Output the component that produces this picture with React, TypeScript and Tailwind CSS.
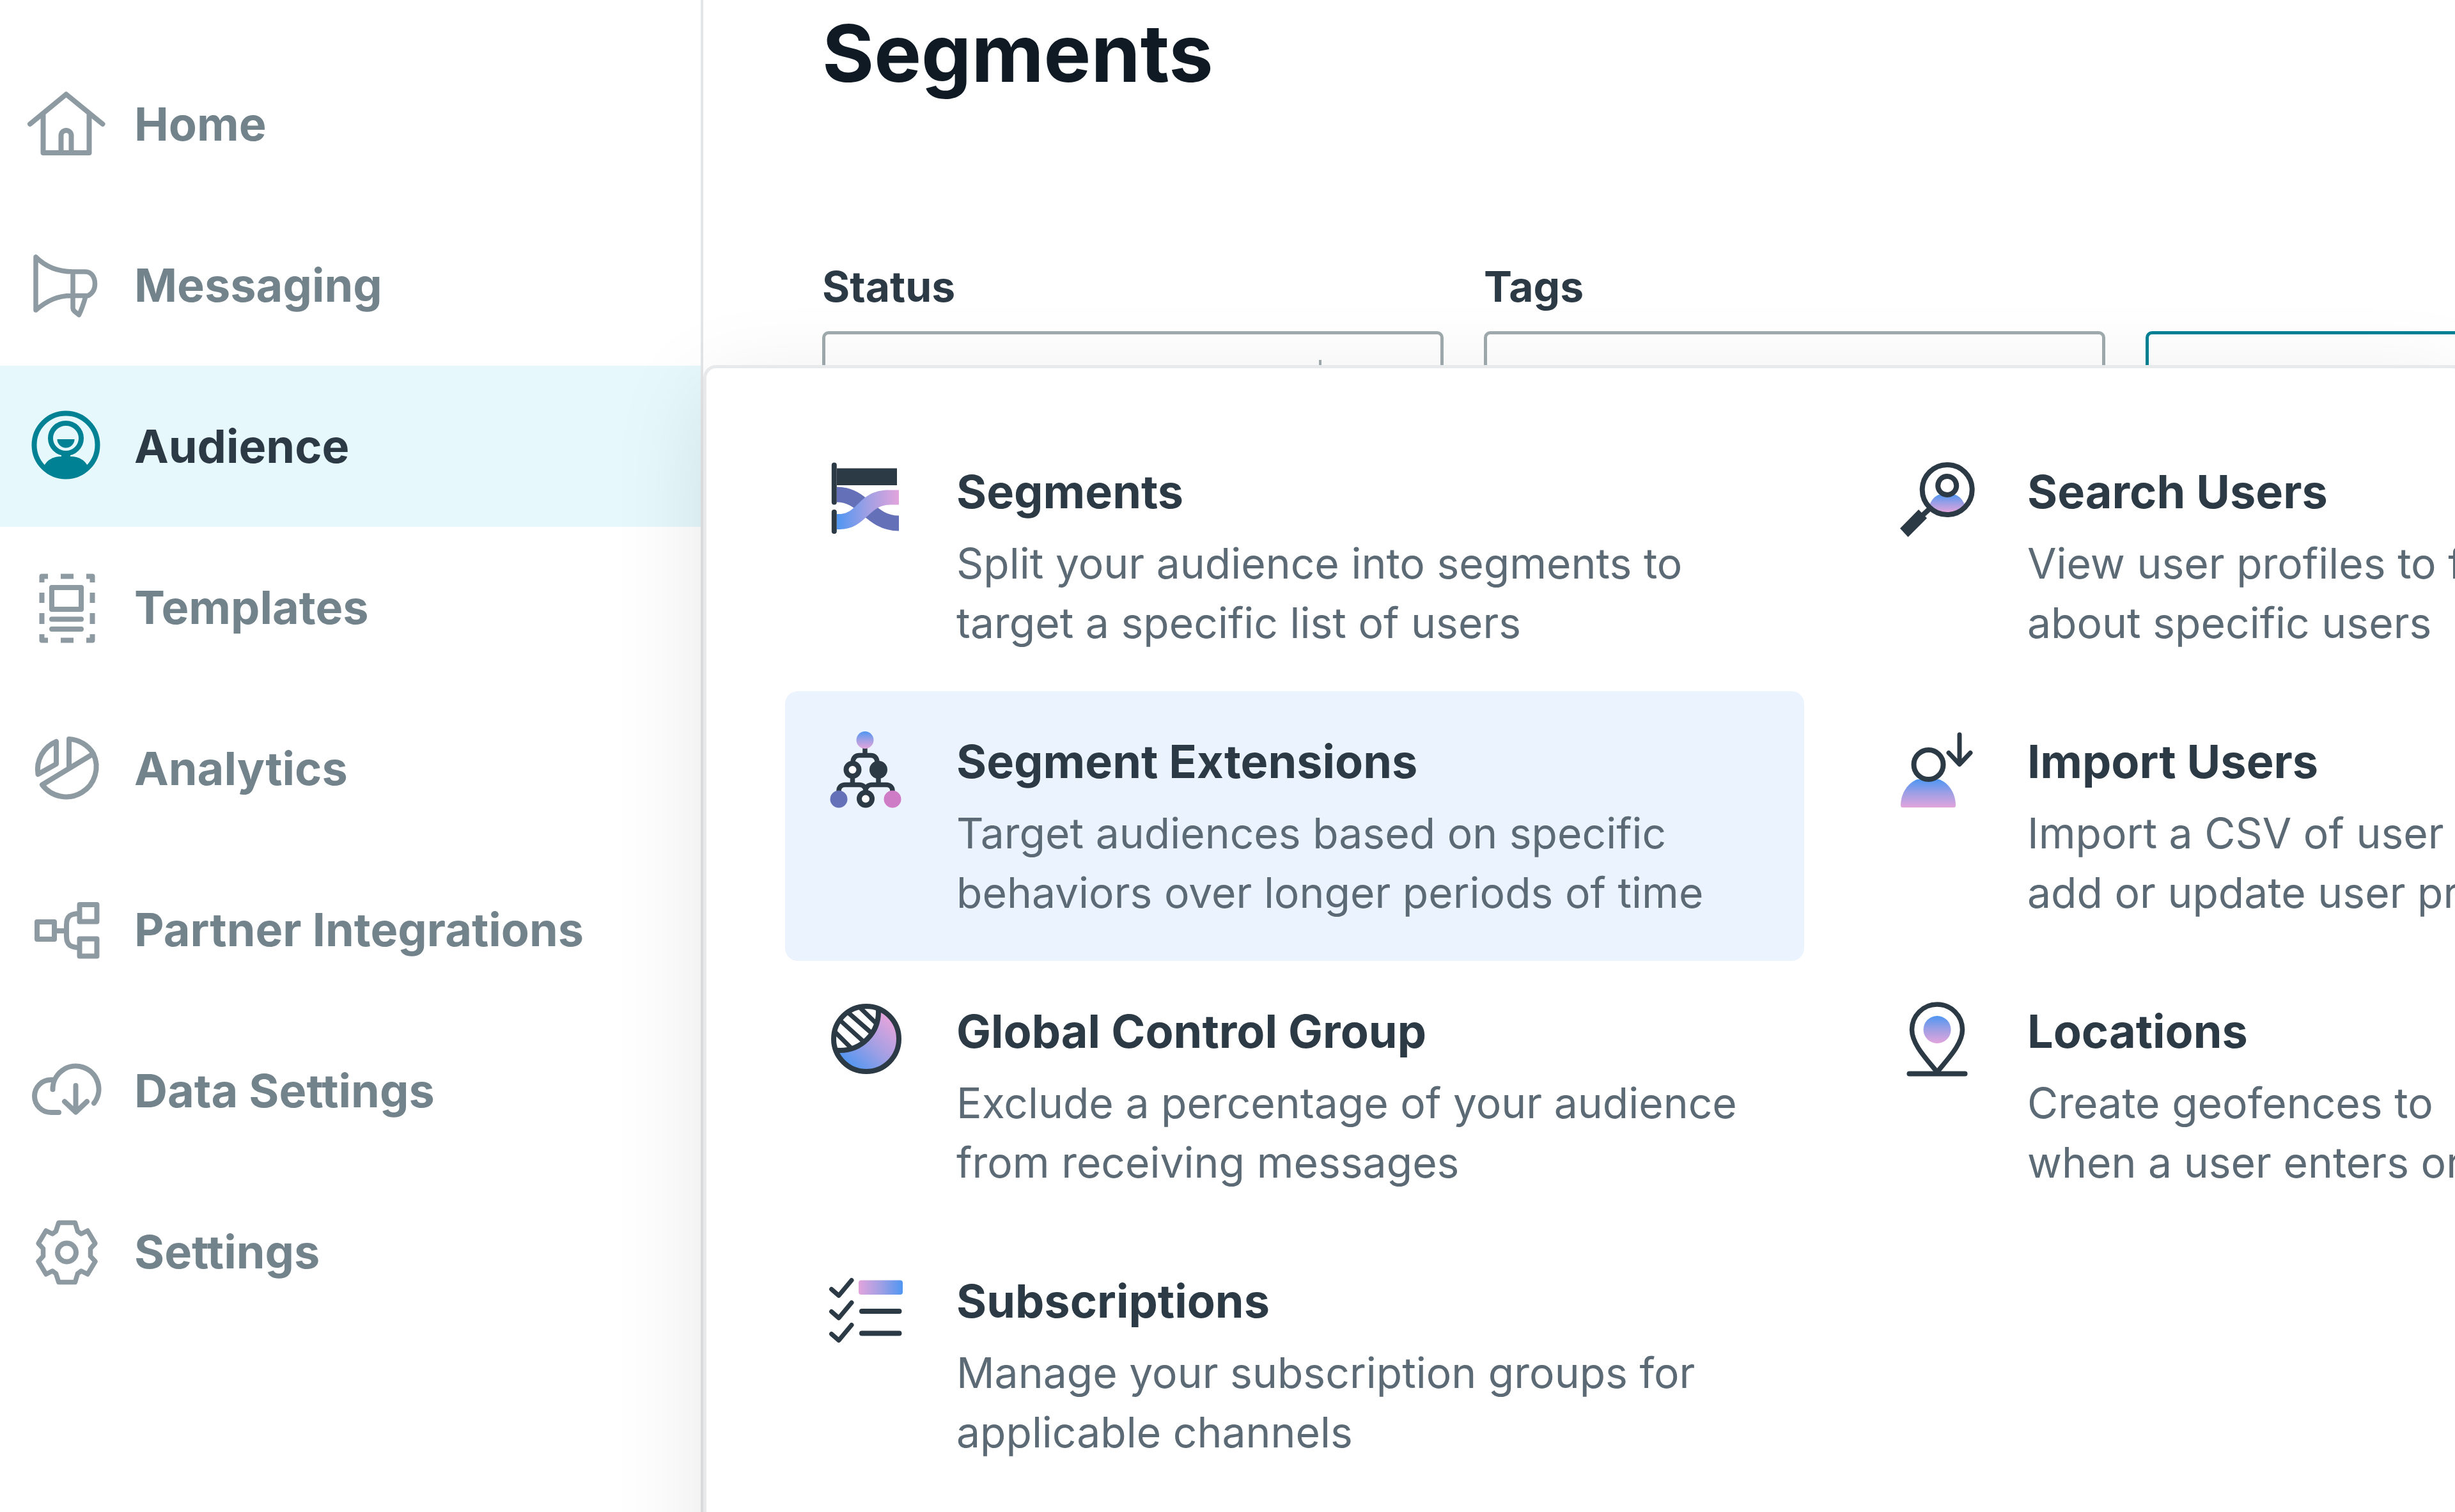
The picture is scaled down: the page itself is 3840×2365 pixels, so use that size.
import type { ReactNode } from "react";

type NavEntry = { label: string; icon: ReactNode; active?: boolean };
type MenuEntry = { title: string; text: string; icon: ReactNode; active?: boolean };

const INK = "#2c3a46";

function LineIcon({ children }: { children: ReactNode }) {
  return (
    <svg
      viewBox="0 0 128 128"
      aria-hidden="true"
      className="size-32 shrink-0"
      fill="none"
      stroke="currentColor"
      strokeWidth={8}
      strokeLinecap="round"
      strokeLinejoin="round"
    >
      {children}
    </svg>
  );
}

function ColorIcon({ children }: { children: ReactNode }) {
  return (
    <svg
      viewBox="0 0 128 128"
      aria-hidden="true"
      className="size-32 shrink-0"
      fill="none"
      stroke={INK}
      strokeWidth={8}
      strokeLinecap="round"
      strokeLinejoin="round"
    >
      {children}
    </svg>
  );
}

function Blend({ id, x1 = "0", y1 = "0", x2 = "0", y2 = "0" }: { id: string; x1?: string; y1?: string; x2?: string; y2?: string }) {
  return (
    <defs>
      <linearGradient id={id} x1={x1} y1={y1} x2={x2} y2={y2}>
        <stop offset="0" stopColor="#4f96f2" />
        <stop offset="0.5" stopColor="#a09fe4" />
        <stop offset="1" stopColor="#e2a4dc" />
      </linearGradient>
    </defs>
  );
}

const navEntries: NavEntry[] = [
  {
    label: "Home",
    icon: (
      <LineIcon>
        <path d="M7 64 63.5 17.5 120.5 64M27.5 48v61h72V48M55.5 109V82a8 8 0 0 1 16 0v27" />
      </LineIcon>
    ),
  },
  {
    label: "Messaging",
    icon: (
      <LineIcon>
        <path
          strokeWidth={7.5}
          d="M16 20v83c18-15 34-22.500 56-22.500h26c7-4 10.500-10 10.500-18.500 0-11-6-19-15-19H74C50 43 31 35 16 20ZM74 43v57c0 3 2 5 9.500 10.500 4-8 8-20 10.500-29"
        />
      </LineIcon>
    ),
  },
  {
    label: "Audience",
    active: true,
    icon: (
      <LineIcon>
        <g className="text-[#008294]" stroke="currentColor">
          <circle cx="63" cy="62" r="49.500" />
          <ellipse cx="63" cy="51.500" rx="24" ry="23.500" />
          <path d="M49.500 53h27a13.500 13.500 0 0 1-27 0Z" fill="currentColor" stroke="none" />
          <path d="M28 96c6-11 15-16 27-16h16c12 0 21 5 27 16-18 24-52 24-70 0Z" fill="currentColor" stroke="none" />
          <path d="M56 74h14v8H56Z" fill="currentColor" stroke="none" />
        </g>
      </LineIcon>
    ),
  },
  {
    label: "Templates",
    icon: (
      <LineIcon>
        <g strokeLinecap="butt">
          <path d="M25.500 25v-9.500H35M95 15.500h9.500V25M104.500 106v9.500H95M35 115.500h-9.500V106" />
          <path d="M55 15.500h20M55 115.500h20M25.500 41v16M25.500 73v17M104.500 41v16M104.500 73v17" />
        </g>
        <rect x="41" y="33" width="46" height="34" />
        <path d="M41 82.500h46M41 98h46" />
      </LineIcon>
    ),
  },
  {
    label: "Analytics",
    icon: (
      <LineIcon>
        <path d="M68 61V18a47 47 0 0 1 38 23M26 89.500 106 41a47 47 0 0 1-80 48.500Z" />
        <path d="M48 22v35L19.500 73A47 47 0 0 1 48 22Z" />
      </LineIcon>
    ),
  },
  {
    label: "Partner Integrations",
    icon: (
      <LineIcon>
        <rect x="18" y="52" width="27" height="27" />
        <rect x="84.500" y="25" width="27" height="26.500" />
        <rect x="84.500" y="78.500" width="27" height="27" />
        <path d="M45 66h19M84 39c-14 0-20 4-20 18v17c0 14 6 18 20 18" strokeLinecap="butt" />
      </LineIcon>
    ),
  },
  {
    label: "Data Settings",
    icon: (
      <LineIcon>
        <path d="M52 98H39.500a25.500 25.500 0 0 1 0-51h4.500" />
        <path d="M42.500 62a36 36 0 1 1 64.500 21.500M78.500 56v41M61 81l17.500 16.500L96 81" />
      </LineIcon>
    ),
  },
  {
    label: "Settings",
    icon: (
      <LineIcon>
        <path
          strokeWidth={7.5}
          d="M51.800 18.500h25.700L81.500 32l5.500 4 10-5 12 20-7.500 8v12l7.500 8-12 20-10-5-5.500 4-4 13.500H51.800L47.500 98 42 94l-10 5-12-20 7.500-8V59L20 51l12-20 10 5 5.500-4Z"
        />
        <circle cx="64.500" cy="65" r="14.500" />
      </LineIcon>
    ),
  },
];

const segmentsIcon = (
  <ColorIcon>
    <Blend id="ribbon" x2="1" y2="0" />
    <path d="M17 18.500h94V45H17Z" fill={INK} stroke="none" />
    <g strokeLinecap="butt" strokeWidth={24}>
      <path d="M17 59.500C60 59.500 68 104.500 114 104.500" stroke="#6470b8" />
    </g>
    <path
      d="M17 90h4C50 90 52 52.500 98 52.500h16v23h-14C66 75.500 62 114 21 114h-4Z"
      fill="url(#ribbon)"
      stroke="none"
    />
    <path d="M12.800 13.500v58M12.800 87v30" />
  </ColorIcon>
);

const extensionsIcon = (
  <ColorIcon>
    <Blend id="node" y2="1" />
    <path strokeWidth={7.5} d="M61 34v11M42 60v-3c0-8 4-11.500 10-11.500h18c6 0 10 3.500 10 11.500v3M41.500 78v13M82 78v13" />
    <path strokeWidth={7.5} d="M20 103v-2c0-6 4-9.500 10-9.500h22c6 0 10 3.500 10 9.500 0-6 4-9.500 10-9.500h22c6 0 10 3.500 10 9.500v2" />
    <circle cx="61" cy="21.500" r="13.500" fill="url(#node)" stroke="none" />
    <circle cx="41.500" cy="68" r="10" fill="#fff" />
    <circle cx="82" cy="68" r="10" fill={INK} />
    <circle cx="62" cy="113.500" r="10" fill="#fff" />
    <circle cx="20" cy="114" r="13.500" fill="#6470b8" stroke="none" />
    <circle cx="104" cy="114" r="13.500" fill="#cf7cc6" stroke="none" />
  </ColorIcon>
);

const controlIcon = (
  <ColorIcon>
    <Blend id="globe" x1="0.2" y1="0.9" x2="0.85" y2="0.2" />
    <clipPath id="globe-edge">
      <circle cx="63" cy="67" r="51" />
    </clipPath>
    <clipPath id="globe-shade">
      <circle cx="22" cy="25" r="60" />
    </clipPath>
    <circle cx="63" cy="67" r="51" fill="url(#globe)" stroke="none" />
    <g clipPath="url(#globe-edge)">
      <circle cx="22" cy="25" r="60" fill="#fff" />
      <path
        clipPath="url(#globe-shade)"
        strokeWidth={7}
        d="M52 17 84 48M36 27 76 62M21 37 64 76M12 54 44 86"
      />
    </g>
    <circle cx="63" cy="67" r="51" />
  </ColorIcon>
);

const subscriptionsIcon = (
  <ColorIcon>
    <Blend id="row" x1="1" />
    <path strokeWidth={7} d="m8.500 36.500 11.500 10 20-24M8.500 71.500l11.500 10 20-24M8.500 106.500l11.500 10 20-24" />
    <rect x="51" y="22.500" width="69" height="22.500" rx="4" fill="url(#row)" stroke="none" />
    <path d="M56 71h58.500M56 105.500h58.500" />
  </ColorIcon>
);

const searchIcon = (
  <ColorIcon>
    <Blend id="lens" y2="1" />
    <path d="M51.500 75c4-10 11-16 20-16h14c9 0 16 6 20.500 16-6 8-15 13-27 13s-21-5-27.500-13Z" fill="url(#lens)" stroke="none" />
    <circle cx="78.700" cy="52" r="39" />
    <circle cx="78.700" cy="45.500" r="14.500" fill="#fff" />
    <path d="m51 82-12 11" />
    <path d="m34 83 13 13.500-29.500 29.500L5 112.500Z" fill={INK} stroke="none" />
  </ColorIcon>
);

const importIcon = (
  <ColorIcon>
    <Blend id="person" y2="1" />
    <path d="M6 124c0-20 12-36 26-41h34c14 5 26 21 26 41 0 2-1 3-3 3H9c-2 0-3-1-3-3Z" fill="url(#person)" stroke="none" />
    <circle cx="49.500" cy="60" r="23" fill="#fff" />
    <path strokeWidth={7} d="M98 13v46M81 41.500l17 18 17-18" />
  </ColorIcon>
);

const locationIcon = (
  <ColorIcon>
    <Blend id="place" y2="1" />
    <path strokeWidth={7.5} d="M63 119C48 100 23.500 76 23.500 52.500a39.500 39.500 0 0 1 79 0C102.500 76 78 100 63 119Z" />
    <circle cx="63" cy="52.500" r="21.500" fill="url(#place)" stroke="none" />
    <path d="M19.500 121.500h87" />
  </ColorIcon>
);

const menuColumns: MenuEntry[][] = [
  [
    { title: "Segments", text: "Split your audience into segments to\ntarget a specific list of users", icon: segmentsIcon },
    {
      title: "Segment Extensions",
      text: "Target audiences based on specific\nbehaviors over longer periods of time",
      icon: extensionsIcon,
      active: true,
    },
    { title: "Global Control Group", text: "Exclude a percentage of your audience\nfrom receiving messages", icon: controlIcon },
    { title: "Subscriptions", text: "Manage your subscription groups for\napplicable channels", icon: subscriptionsIcon },
  ],
  [
    { title: "Search Users", text: "View user profiles to find\nabout specific users", icon: searchIcon },
    { title: "Import Users", text: "Import a CSV of user\nadd or update user profiles", icon: importIcon },
    { title: "Locations", text: "Create geofences to\nwhen a user enters or", icon: locationIcon },
  ],
];

function Sidebar() {
  return (
    <nav aria-label="Main" className="w-[1100px] shrink-0 border-r-4 border-[#e3e5e7] bg-white pt-[68px]">
      <ul>
        {navEntries.map(({ label, icon, active }) => (
          <li key={label}>
            <a
              href="#"
              aria-current={active ? "page" : undefined}
              className={
                active
                  ? "flex h-[252px] items-center gap-[42px] bg-[#e6f8fc] pl-10"
                  : "flex h-[252px] items-center gap-[42px] pl-10 text-[#8d9aa2]"
              }
            >
              {icon}
              <span
                className={
                  active
                    ? "text-[72px] leading-[88px] font-bold text-[#2c3a46]"
                    : "text-[72px] leading-[88px] font-bold text-[#73838c]"
                }
              >
                {label}
              </span>
            </a>
          </li>
        ))}
      </ul>
    </nav>
  );
}

function Filter({ id, label, divided }: { id: string; label: string; divided?: boolean }) {
  return (
    <div className="w-[972px] shrink-0">
      <label htmlFor={id} className="block text-[66px] leading-[82px] font-bold text-[#2c3a46]">
        {label}
      </label>
      <div className="relative mt-[29px]">
        <select
          id={id}
          className="block h-[130px] w-full appearance-none rounded-[10px] border-[5px] border-[#9fabae] bg-white"
        />
        {divided && <span className="absolute top-[45px] right-[191px] h-10 w-1 bg-[#9fabae]" />}
      </div>
    </div>
  );
}

function MenuCard({ title, text, icon, active }: MenuEntry) {
  return (
    <li>
      <a
        href="#"
        className={
          active
            ? "flex h-[422px] w-[1594px] gap-[76px] rounded-[20px] bg-[#ebf3ff] pt-[55px] pl-16"
            : "flex h-[422px] w-[1594px] gap-[76px] rounded-[20px] pt-[55px] pl-16"
        }
      >
        {icon}
        <span className="block pt-[11px]">
          <span className="block text-[72px] leading-[88px] font-bold text-[#2c3a46]">{title}</span>
          <span className="mt-[22px] block text-[66px] leading-[93px] whitespace-pre text-[#5b6a74]">{text}</span>
        </span>
      </a>
    </li>
  );
}

export default function App() {
  return (
    <div className="relative flex h-screen overflow-hidden bg-white font-['Inter',sans-serif]">
      <Sidebar />
      <main className="min-w-0 grow overflow-hidden pt-2 pl-[186px]">
        <h1 className="text-[124px] leading-[150px] font-bold text-[#0f1a24]">Segments</h1>
        <div className="mt-[249px] flex items-end gap-[63px]">
          <Filter id="status" label="Status" divided />
          <Filter id="tags" label="Tags" />
          <button
            type="button"
            aria-label="Apply filters"
            className="h-[130px] w-[972px] shrink-0 rounded-[10px] border-[5px] border-[#008294]"
          />
        </div>
      </main>

      <section
        aria-label="Audience"
        className="absolute top-[571px] -right-4 -bottom-40 left-[1100px] overflow-hidden rounded-[20px] border-[5px] border-[#e7e9eb] bg-white pt-[83px] pl-[123px] shadow-[0_40px_150px_rgba(0,0,0,0.1)]"
      >
        <div className="flex gap-[81px]">
          {menuColumns.map((column) => (
            <ul key={column[0].title} className="shrink-0">
              {column.map((entry) => (
                <MenuCard key={entry.title} {...entry} />
              ))}
            </ul>
          ))}
        </div>
      </section>
    </div>
  );
}
